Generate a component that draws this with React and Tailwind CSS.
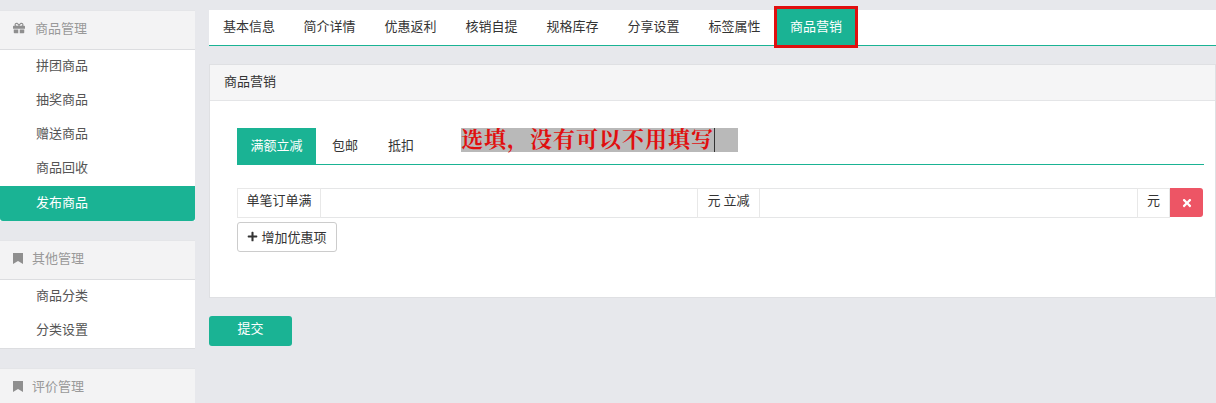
import React from "react";
import { FaGift, FaPlus, FaTimes } from "react-icons/fa";

const tabs = ["基本信息", "简介详情", "优惠返利", "核销自提", "规格库存", "分享设置", "标签属性"];

const BookmarkIcon = () => (
  <svg width="10" height="11" viewBox="0 0 10 11" fill="currentColor">
    <path d="M0 0h10v11L5 8l-5 3z" />
  </svg>
);

const SideGroup = ({ icon, title, items = [], active, last, wide }) => (
  <div className={"bg-white mb-[19px] " + (last || active ? "" : "border-b border-b-[#dcdde0]")}>
    <div className="h-[40px] bg-[#f3f3f4] border-b border-b-[#dcdde0] border-t border-t-[#e4e5e8] flex items-center pl-[13px] pb-[4px] text-[#999]">
      <span className={wide ? "w-[22px] flex text-[#8f8f8f]" : "w-[19px] flex text-[#8f8f8f]"}>{icon}</span>
      <span>{title}</span>
    </div>
    {items.map((item) => (
      <div
        key={item}
        className={
          item === active
            ? "h-[35px] pl-[36px] pb-[4px] flex items-center bg-[#1ab394] text-white rounded-b-[3px]"
            : "h-[34px] pl-[36px] pb-[4px] flex items-center text-[#555]"
        }
      >
        {item}
      </div>
    ))}
  </div>
);

export default function App() {
  return (
    <div
      className="h-[403px] w-[1216px] overflow-hidden bg-[#e7e8ec] flex text-[13px] text-[#333]"
      style={{ fontFamily: '"Noto Sans CJK SC", "Liberation Sans", sans-serif' }}
    >
      {/* Sidebar */}
      <div className="w-[195px] pt-[10px] shrink-0">
        <SideGroup
          icon={<FaGift size={12} />}
          wide
          title="商品管理"
          items={["拼团商品", "抽奖商品", "赠送商品", "商品回收", "发布商品"]}
          active="发布商品"
        />
        <SideGroup icon={<BookmarkIcon />} title="其他管理" items={["商品分类", "分类设置"]} />
        <SideGroup icon={<BookmarkIcon />} title="评价管理" last />
      </div>

      {/* Main */}
      <div className="ml-[14px] flex-1 pt-[10px]">
        <div className="bg-white">
          <div className="h-[35px] flex">
            {tabs.map((tab) => (
              <div key={tab} className="w-[81px] pb-[3px] flex items-center justify-center text-[#333] first:w-[80px]">
                {tab}
              </div>
            ))}
            <div className="relative z-10 ml-[-1px] w-[84px]">
              <div className="absolute left-0 right-0 top-[-4px] h-[42px] border-[3px] border-[#e00f0f] bg-[#1ab394] text-white pb-[2px] flex items-center justify-center">
                商品营销
              </div>
            </div>
          </div>
          <div className="h-px bg-[#1ab394]"></div>
        </div>

        <div className="mt-[18px] h-[234px] bg-white border border-[#dfe0e3]">
          <div className="h-[36px] bg-[#f5f5f6] border-b border-b-[#e4e5e7] pb-[4px] flex items-center pl-[14px]">商品营销</div>
          <div className="pl-[27px] pr-[11px] pt-[27px]">
            <div className="h-[36px] flex">
              <div className="w-[79px] pb-[2px] bg-[#1ab394] text-white flex items-center justify-center">满额立减</div>
              <div className="w-[58px] pb-[2px] flex items-center justify-center">包邮</div>
              <div className="w-[54px] pb-[2px] flex items-center justify-center">抵扣</div>
              <div
                className="ml-[33px] h-[24px] w-[277px] bg-[#b9b9b9] text-[#e00f0f] text-[22px] leading-[20px] tracking-[1px] font-bold whitespace-nowrap"
                style={{ fontFamily: '"Noto Serif CJK SC", "Noto Sans CJK SC", serif' }}
              >
                <span className="border-r border-r-[#333] inline-block h-[24px] w-[254px]">选填，没有可以不用填写</span>
              </div>
            </div>
            <div className="h-px bg-[#1ab394]"></div>

            <div className="mt-[23px] mr-[1px] h-[30px] flex">
              <div className="w-[84px] pb-[6px] border border-[#e8e8e8] flex items-center justify-center">单笔订单满</div>
              <div className="flex-1 border-y border-y-[#e5e6e7]"></div>
              <div className="w-[63px] pb-[6px] border border-[#e8e8e8] flex items-center justify-center">元 立减</div>
              <div className="w-[377px] border-y border-y-[#e5e6e7]"></div>
              <div className="w-[33px] pb-[6px] border border-[#e8e8e8] flex items-center justify-center">元</div>
              <div className="w-[33px] h-[29px] bg-[#ed5565] text-white rounded-r-[3px] flex items-center justify-center">
                <FaTimes size={12} />
              </div>
            </div>

            <button className="mt-[4px] h-[30px] w-[100px] pb-[1px] bg-white border border-[#ccc] rounded-[3px] flex items-center justify-center gap-[3px]">
              <FaPlus size={11} />
              增加优惠项
            </button>
          </div>
        </div>

        <button className="mt-[18px] h-[30px] w-[83px] pb-[6px] bg-[#1ab394] text-white rounded-[3px] flex items-center justify-center">
          提交
        </button>
      </div>
    </div>
  );
}
